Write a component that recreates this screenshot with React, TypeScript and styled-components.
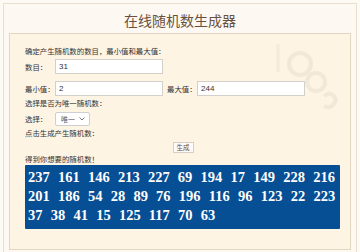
import styled, { createGlobalStyle } from "styled-components";

const GlobalStyle = createGlobalStyle`
  html, body {
    margin: 0;
    padding: 0;
    background: #fdfaf4;
  }
  body {
    padding: 3px;
    font-family: "Noto Sans CJK SC", "Noto Sans", sans-serif;
    color: #333;
  }
`;

const numbers = [
  237, 161, 146, 213, 227, 69, 194, 17, 149, 228, 216, 201, 186, 54, 28, 89,
  76, 196, 116, 96, 123, 22, 223, 37, 38, 41, 15, 125, 117, 70, 63,
];

const App = () => {
  return (
    <>
      <GlobalStyle />
      <Frame>
        <Title>在线随机数生成器</Title>
        <Panel>
          <Watermark width="90" height="90" viewBox="0 0 90 90">
            <circle cx="40" cy="30" r="11" fill="none" stroke="#f1e8d8" strokeWidth="4" />
            <circle cx="56" cy="48" r="9" fill="none" stroke="#f1e8d8" strokeWidth="4" />
            <path d="M64 62 q8 -6 12 4 q-4 10 -12 6" fill="none" stroke="#f1e8d8" strokeWidth="4" />
            <path d="M18 10 v28" stroke="#f3ebdd" strokeWidth="3" />
          </Watermark>
          <Line>确定产生随机数的数目，最小值和最大值：</Line>
          <FieldRow $top={2}>
            <Label>数目：</Label>
            <Input defaultValue="31" />
          </FieldRow>
          <FieldRow $top={6}>
            <Label>最小值：</Label>
            <Input defaultValue="2" />
            <Label $left={4}>最大值：</Label>
            <Input defaultValue="244" />
          </FieldRow>
          <Line>选择是否为唯一随机数：</Line>
          <FieldRow $top={2}>
            <Label>选择：</Label>
            <Select>
              唯一
              <svg width="6" height="4" viewBox="0 0 6 4">
                <path d="M0.5 0.5 L3 3 L5.5 0.5" fill="none" stroke="#666" strokeWidth="0.9" />
              </svg>
            </Select>
          </FieldRow>
          <Line>点击生成产生随机数：</Line>
          <ButtonRow>
            <Button>生成</Button>
          </ButtonRow>
          <Line>得到你想要的随机数！</Line>
          <Result>{numbers.join(" ")}</Result>
        </Panel>
      </Frame>
    </>
  );
};

export default App;

const Frame = styled.div`
  width: 354px;
  height: 252px;
  box-sizing: border-box;
  border: 1px solid #e8dfcf;
  border-bottom: none;
  background: #fdf9f2;
  padding: 0 5px;
`;

const Title = styled.div`
  height: 29px;
  line-height: 32px;
  text-align: center;
  font-size: 14px;
  color: #6a5040;
`;

const Panel = styled.div`
  position: relative;
  overflow: hidden;
  height: 217px;
  box-sizing: border-box;
  border: 1px solid #e3d6c0;
  background: #fdf4e4;
  padding: 11px 9px 0 15px;
  display: flex;
  flex-direction: column;
`;

const Watermark = styled.svg`
  position: absolute;
  top: 0;
  right: 0;
  pointer-events: none;
`;

const Line = styled.div`
  position: relative;
  height: 12px;
  line-height: 12px;
  font-size: 7.4px;
  color: #333;
`;

const FieldRow = styled.div<{ $top: number }>`
  position: relative;
  display: flex;
  align-items: center;
  margin-top: ${(p) => p.$top}px;
  margin-bottom: 1px;
  height: 15px;
`;

const Label = styled.span<{ $left?: number }>`
  width: 30px;
  margin-left: ${(p) => p.$left || 0}px;
  font-size: 7.4px;
  color: #333;
`;

const Input = styled.input`
  width: 108px;
  height: 15px;
  box-sizing: border-box;
  border: 1px solid #d3d0cc;
  background: #fff;
  padding: 0 3px;
  font-family: "Liberation Sans", Arial, sans-serif;
  font-size: 8px;
  color: #333;
  outline: none;
`;

const Select = styled.div`
  width: 35px;
  height: 14px;
  box-sizing: border-box;
  border: 1px solid #cfcfcf;
  border-radius: 2px;
  background: #fff;
  display: flex;
  align-items: center;
  justify-content: space-between;
  padding: 0 4px 0 5px;
  font-size: 7px;
  color: #555;
`;

const ButtonRow = styled.div`
  position: relative;
  display: flex;
  justify-content: center;
  margin: 3px 0 0;
`;

const Button = styled.button`
  width: 21px;
  height: 11px;
  padding: 0;
  box-sizing: border-box;
  border: 1px solid #d5cfc6;
  background: #fdfbf7;
  font-family: "Noto Sans CJK SC", sans-serif;
  font-size: 6.5px;
  line-height: 9px;
  color: #6a5040;
`;

const Result = styled.div`
  position: relative;
  width: 315px;
  box-sizing: border-box;
  padding: 3px 3px 4px;
  background: #074f94;
  border-radius: 1px;
  color: #fff;
  font-family: "Liberation Serif", "Times New Roman", serif;
  font-weight: bold;
  font-size: 14.5px;
  line-height: 19px;
  word-spacing: 4.6px;
`;
